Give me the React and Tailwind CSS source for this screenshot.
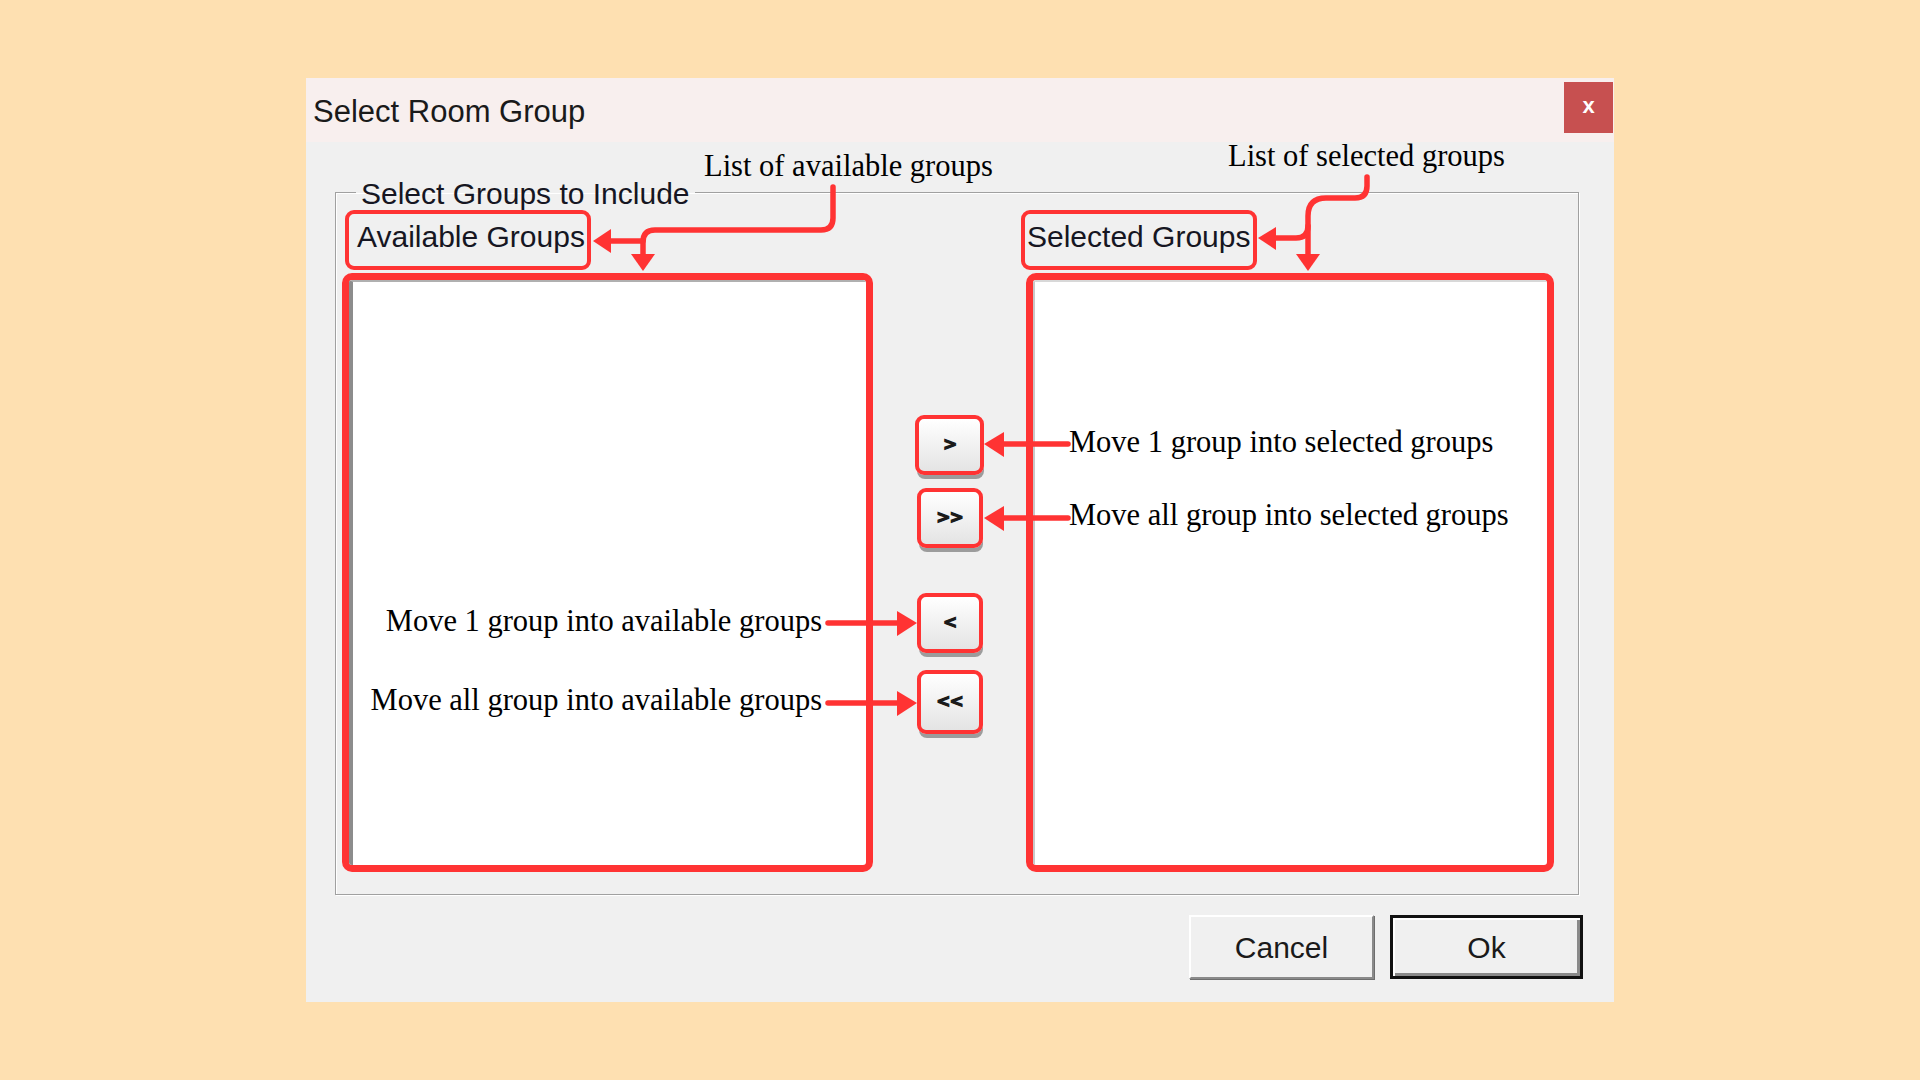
const RED = "#ff3333";

const MoveButton = ({ label, className }) => (
  <div
    className={
      "h-[60px] border-4 border-[#ff3333] rounded-[9px] bg-gradient-to-b from-white to-[#e4e4e4] flex items-center justify-center shadow-[1px_5px_0_-1px_#9c9c9c] font-['DejaVu_Sans',sans-serif] text-[17px] font-bold tracking-[-1px] text-[#1a1a1a] [-webkit-text-stroke:1.2px_#1a1a1a] " +
      className
    }
  >
    {label}
  </div>
);

const Note = ({ children, className }) => (
  <span
    className={
      "absolute whitespace-nowrap font-['Liberation_Serif','Times_New_Roman',serif] text-[30.5px] leading-[30px] text-black " +
      className
    }
  >
    {children}
  </span>
);

const Annotations = () => (
  <div className="absolute inset-0 pointer-events-none">
    <svg width="1920" height="1080" className="absolute inset-0">
      <g fill="none" stroke={RED} strokeWidth="5.5" strokeLinecap="round" strokeLinejoin="round">
        {/* list of available groups */}
        <path d="M833 187 V218 Q833 230 821 230 H655 Q643 230 643 242 V256" />
        <path d="M643 241 H608" />
        {/* list of selected groups */}
        <path d="M1367 177 V186 Q1367 198 1355 198 H1326 Q1308 198 1308 216 V256" />
        <path d="M1308 226 Q1308 238 1296 238 H1274" />
        {/* move buttons */}
        <path d="M1002 444 H1068" />
        <path d="M1002 518 H1068" />
        <path d="M828 623 H899" />
        <path d="M828 703 H899" />
      </g>
      <g fill={RED}>
        <polygon points="631,254 655,254 643,271" />
        <polygon points="593,241 611,229 611,253" />
        <polygon points="1296,254 1320,254 1308,271" />
        <polygon points="1258,238 1276,227 1276,250" />
        <polygon points="984,444 1004,432 1004,457" />
        <polygon points="984,518 1004,506 1004,531" />
        <polygon points="917,623 897,611 897,636" />
        <polygon points="917,703 897,691 897,716" />
      </g>
    </svg>
    <Note className="left-[704px] top-[151px]">List of available groups</Note>
    <Note className="left-[1228px] top-[141px]">List of selected groups</Note>
    <Note className="left-[1069px] top-[427px]">Move 1 group into selected groups</Note>
    <Note className="left-[1069px] top-[500px]">Move all group into selected groups</Note>
    <Note className="right-[1098px] top-[606px]">Move 1 group into available groups</Note>
    <Note className="right-[1098px] top-[685px]">Move all group into available groups</Note>
  </div>
);

export default function App() {
  return (
    <div className="relative w-[1920px] h-[1080px] overflow-hidden bg-[#fee0b1] pt-[78px] pl-[306px] font-['Liberation_Sans',Arial,sans-serif] text-[#161622]">
      <div className="w-[1308px] h-[924px] bg-[#f0f0f0] flex flex-col">
        {/* title bar */}
        <div className="h-[64px] bg-[#f8efee] flex items-start justify-between">
          <span className="pl-[7px] pt-[2px] text-[31px] leading-[64px] text-[#1a1a1a]">Select Room Group</span>
          <div className="mt-[4px] mr-[1px] w-[49px] h-[51px] bg-[#c75050] flex items-center justify-center text-white font-bold text-[22px] leading-none pb-[3px]">
            x
          </div>
        </div>

        <div className="px-[29px] pt-[31px] flex flex-col">
          <fieldset className="w-[1244px] border border-[#a0a0a0] shadow-[inset_1px_1px_0_#fff,1px_1px_0_#fff] pl-[6px] pr-[24px] pb-[22px]">
            <legend className="ml-[14px] px-[5px] pt-[4px] text-[30px] leading-[34px]">Select Groups to Include</legend>

            <div className="grid grid-cols-[531px_153px_528px] -mt-[1px]">
              <div className="ml-[3px] w-[246px] h-[60px] border-4 border-[#ff3333] rounded-[9px] pl-[8px] pt-[6px] text-[30px] leading-[34px] whitespace-nowrap">
                Available Groups
              </div>
              <div />
              <div className="-ml-[5px] w-[236px] h-[60px] border-4 border-[#ff3333] rounded-[9px] pl-[2px] pt-[6px] text-[30px] leading-[34px] whitespace-nowrap">
                Selected Groups
              </div>
            </div>

            <div className="grid grid-cols-[531px_153px_528px] mt-[3px] h-[599px]">
              <div className="border-[7px] border-[#ff3333] rounded-[10px] bg-white overflow-hidden">
                <div className="h-full border-l-4 border-t-2 border-l-[#8c8c8c] border-t-[#b0b0b0]" />
              </div>

              <div className="flex flex-col items-center pt-[142px]">
                <MoveButton label=">" className="w-[69px]" />
                <MoveButton label=">>" className="w-[66px] mt-[13px]" />
                <MoveButton label="<" className="w-[66px] mt-[45px]" />
                <MoveButton label="<<" className="w-[66px] mt-[17px] h-[64px]" />
              </div>

              <div className="border-[7px] border-[#ff3333] rounded-[10px] bg-white overflow-hidden">
                <div className="h-full border-l-2 border-t-2 border-l-[#c8c8c8] border-t-[#d8d8d8]" />
              </div>
            </div>
          </fieldset>

          <div className="flex justify-end gap-[16px] mt-[20px] pr-[2px]">
            <button className="w-[185px] h-[64px] bg-[#f0f0f0] border-2 border-t-white border-l-white border-r-[#8a8a8a] border-b-[#8a8a8a] shadow-[1px_1px_0_#6e6e6e] text-[30px] text-[#1a1a1a]">
              Cancel
            </button>
            <button className="w-[193px] h-[64px] bg-[#f0f0f0] border-[3px] border-[#111] shadow-[inset_2px_2px_0_#fff,inset_-3px_-3px_0_#8a8a8a] text-[30px] text-[#1a1a1a]">
              Ok
            </button>
          </div>
        </div>
      </div>

      <Annotations />
    </div>
  );
}
